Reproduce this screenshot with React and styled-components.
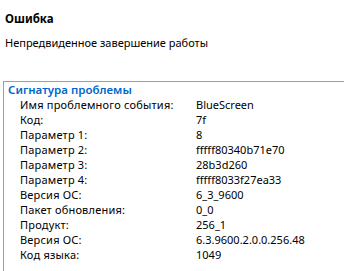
import React from 'react';
import styled, { createGlobalStyle } from 'styled-components';

const GlobalStyle = createGlobalStyle`
    body {
        margin: 0;
        background: #ffffff;
        font-family: "Noto Sans", "Open Sans", sans-serif;
        font-size: 11px;
        color: #000000;
    }
`;

const StPage = styled.div`
    width: 347px;
    height: 271px;
    overflow: hidden;
    padding: 11px 0 0 0;
    box-sizing: border-box;
`;

const StTitle = styled.div`
    padding-left: 5px;
    font-weight: 700;
    font-size: 11.5px;
    line-height: 16px;
`;

const StMessage = styled.div`
    padding-left: 5px;
    margin-top: 8px;
    line-height: 16px;
`;

const StBox = styled.div`
    margin: 30px 0 0 3px;
    width: 341px;
    height: 200px;
    border: 1px solid #a0a0a0;
    border-right: none;
    border-bottom: none;
    box-sizing: border-box;
    padding: 0 0 0 4px;
`;

const StHeading = styled.div`
    color: #0066cc;
    font-weight: 600;
    font-size: 11.5px;
    line-height: 15px;
`;

const StRows = styled.div`
    display: grid;
    grid-template-columns: 176px auto;
    padding-left: 12px;
    line-height: 15px;
`;

const StLabel = styled.span`
    letter-spacing: 0.2px;
`;

const rows = [
    ['Имя проблемного события:', 'BlueScreen'],
    ['Код:', '7f'],
    ['Параметр 1:', '8'],
    ['Параметр 2:', 'fffff80340b71e70'],
    ['Параметр 3:', '28b3d260'],
    ['Параметр 4:', 'fffff8033f27ea33'],
    ['Версия ОС:', '6_3_9600'],
    ['Пакет обновления:', '0_0'],
    ['Продукт:', '256_1'],
    ['Версия ОС:', '6.3.9600.2.0.0.256.48'],
    ['Код языка:', '1049'],
];

const App = () => (
    <StPage>
        <GlobalStyle />
        <StTitle>Ошибка</StTitle>
        <StMessage>Непредвиденное завершение работы</StMessage>
        <StBox>
            <StHeading>Сигнатура проблемы</StHeading>
            <StRows>
                {rows.map(([label, value], i) => (
                    <React.Fragment key={i}>
                        <StLabel>{label}</StLabel>
                        <span>{value}</span>
                    </React.Fragment>
                ))}
            </StRows>
        </StBox>
    </StPage>
);

export default App;
